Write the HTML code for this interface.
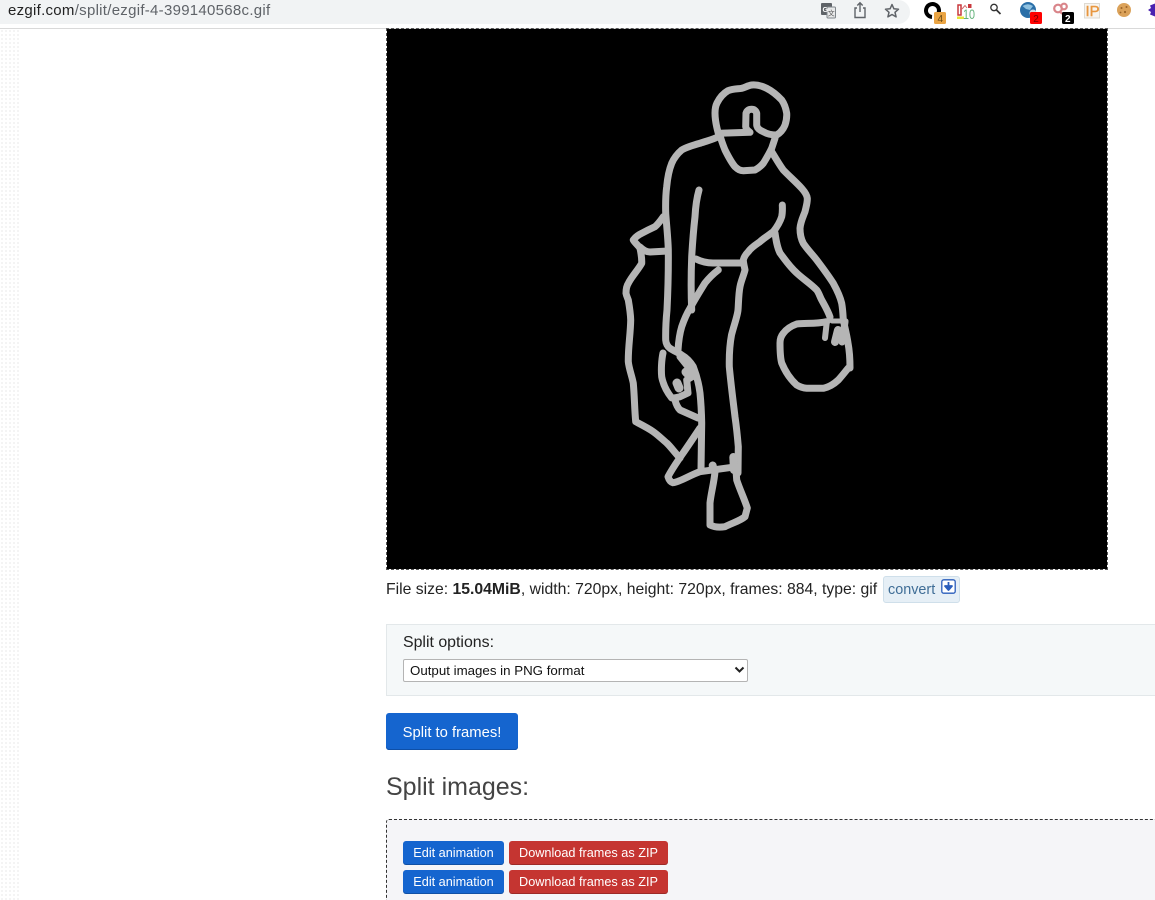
<!DOCTYPE html>
<html lang="en"><head><meta charset="utf-8"><title>ezgif split</title>
<style>
html,body{margin:0;padding:0;background:#fff;width:1155px;height:900px;overflow:hidden}
body{position:relative;font-family:"Liberation Sans",sans-serif;color:#222}
.a{position:absolute}
.pill{left:0;top:0;width:910px;height:24px;background:#f1f3f4;border-radius:0 12px 12px 0}
.url{left:8px;top:1px;font-size:15px;line-height:20px;color:#5f6368;letter-spacing:.28px;white-space:nowrap}
.url b{font-weight:400;color:#222}
.rule{left:0;top:28px;width:1155px;height:1px;background:#d9d9d9}
.dots{left:0;top:29px;width:19px;height:871px;background-image:radial-gradient(#f0f0f0 .8px,transparent 1px);background-size:4px 4px}
.img{left:387px;top:29px;width:720px;height:540px;background:#000;outline:1px dashed #555}
.info{left:386px;top:580px;font-size:15.75px;line-height:20px;white-space:nowrap;color:#222}
.conv{left:883px;top:576px;width:75px;height:25px;background:#e6eff6;border:1px solid #cfdfea;border-radius:3px}
.conv span{position:absolute;left:4px;top:4px;font-size:14.4px;line-height:18px;color:#3f6d96}
.panel{left:386px;top:624px;width:770px;height:70px;background:#f5f8f9;border:1px solid #e3e8ea;border-right:0}
.lab{left:403px;top:633px;font-size:15.9px;line-height:20px;color:#222}
.sel{left:403px;top:659px;width:343px;height:21px;background:#fff;border:1px solid #b4b4b4;border-radius:2px}
.sel span{position:absolute;left:6px;top:3px;font-size:13.3px;line-height:16px;color:#111}
.btn{text-align:center;color:#fff;border-radius:3px;white-space:nowrap}
.big{left:386px;top:713px;width:132px;height:37px;line-height:41px;font-size:14.8px;background:#1565cf;box-shadow:inset 0 -1px 0 #0e4fa8}
h2{position:absolute;margin:0;left:386px;top:771px;font-size:25px;line-height:33px;font-weight:400;color:#444}
.box{left:386px;top:819px;width:780px;height:90px;background:#f5f5f8;border:1px dashed #333;border-radius:3px}
.s{height:24px;line-height:24px;font-size:12.7px;box-shadow:inset 0 -1px 0 rgba(0,0,0,.2)}
.bl{left:403px;width:101px;background:#1565cf}
.rd{left:509px;width:159px;background:#c53531}
</style></head><body>
<div class="a pill"></div>
<div class="a url"><b>ezgif.com</b>/split/ezgif-4-399140568c.gif</div>

<!-- toolbar icons -->
<svg class="a" style="left:810px;top:0" width="345" height="28" viewBox="810 0 345 28">
  <!-- translate -->
  <rect x="821" y="3" width="11" height="12" rx="1" fill="#5f6368"/>
  <rect x="827" y="7" width="8.500" height="11" rx="1" fill="#e8e9ea" stroke="#80868b"/>
  <text x="822.500" y="12" font-family="Liberation Sans" font-size="7" font-weight="700" fill="#fff">G</text>
  <text x="827.800" y="15.500" font-family="Noto Sans CJK SC,sans-serif" font-size="7" fill="#555">文</text>
  <!-- share -->
  <path d="M857 8H855V17.500H865V8H863M860 12V3M857.300 5.500L860 2.800L862.700 5.500" fill="none" stroke="#5f6368" stroke-width="1.400"/>
  <!-- star -->
  <path d="M892 4.500L893.900 8.800L898.500 9.200L895 12.300L896.100 16.900L892 14.500L887.900 16.900L889 12.300L885.500 9.200L890.100 8.800Z" fill="none" stroke="#5f6368" stroke-width="1.500" stroke-linejoin="round"/>
  <!-- O ext -->
  <path d="M938 14A6.500 6.500 0 1 0 932 17" fill="none" stroke="#000" stroke-width="4"/>
  <rect x="934" y="12" width="12" height="12" rx="1.500" fill="#eaa443"/>
  <text x="937.500" y="22" font-family="Liberation Sans" font-size="10" fill="#6b4a14">4</text>
  <!-- 10 ext -->
  <rect x="958" y="5" width="3" height="10" fill="#fff" stroke="#c9393d" stroke-width="1.500"/>
  <rect x="968" y="4" width="3.500" height="4" fill="#c9393d"/>
  <path d="M962 9L965 5.500L967 8" fill="none" stroke="#d36a6a"/>
  <rect x="957" y="16.500" width="7" height="2.500" fill="#e8e337"/>
  <text x="963" y="19" font-family="Liberation Sans" font-size="14" textLength="12" lengthAdjust="spacingAndGlyphs" fill="#63b27a">10</text>
  <!-- search -->
  <circle cx="994" cy="7.500" r="3.200" fill="none" stroke="#333" stroke-width="1.300"/>
  <path d="M996.500 10L1000.500 14" stroke="#333" stroke-width="1.700"/>
  <!-- globe -->
  <circle cx="1028" cy="10" r="8" fill="#2a6fa8"/>
  <path d="M1022.500 6Q1028 2.500 1033 6L1030 10L1026 9Z" fill="#8fc1e0"/>
  <circle cx="1033" cy="13" r="3.500" fill="#d5d9e0"/>
  <rect x="1030" y="12" width="12" height="12" rx="1.500" fill="#f00"/>
  <text x="1033.300" y="22" font-family="Liberation Sans" font-size="10" fill="#700">2</text>
  <!-- ribbon -->
  <circle cx="1058" cy="8.500" r="3.800" fill="none" stroke="#d9858a" stroke-width="2.200"/>
  <circle cx="1064" cy="6.500" r="2.800" fill="none" stroke="#d9858a" stroke-width="2.200"/>
  <path d="M1060 12L1067 17" stroke="#d9858a" stroke-width="2.200"/>
  <rect x="1062" y="12" width="12" height="12" rx="1.500" fill="#000"/>
  <text x="1065" y="22" font-family="Liberation Sans" font-size="10" font-weight="700" fill="#fff">2</text>
  <!-- IP -->
  <rect x="1084.500" y="3.500" width="15" height="14.500" fill="#f8f4ee" stroke="#dedad2"/>
  <text x="1085.500" y="16" font-family="Liberation Sans" font-size="15" stroke="#e8963e" stroke-width=".4" fill="#e8963e">IP</text>
  <!-- cookie -->
  <circle cx="1124" cy="10" r="7" fill="#dba25a"/>
  <circle cx="1121.500" cy="8" r="1" fill="#9a6428"/><circle cx="1126.500" cy="7" r="1" fill="#9a6428"/><circle cx="1125" cy="12" r="1.100" fill="#9a6428"/><circle cx="1120.500" cy="12.500" r=".9" fill="#9a6428"/>
  <!-- purple -->
  <path d="M1155 3.500L1150 5.500L1151 8L1148 10L1151 12L1150 14.500L1155 16.500Z" fill="#4a22b0"/>
</svg>
<div class="a rule"></div>
<div class="a dots"></div>

<div class="a img"></div>
<svg class="a" style="left:387px;top:29px" width="720" height="540" viewBox="387 29 720 540">
  <g fill="none" stroke="#b5b5b5" stroke-width="7" stroke-linecap="round" stroke-linejoin="round">
    <!-- hair -->
    <path d="M718.300 133.300C716 125 715 118 715 113C715 108 716 105 717 103C720 97 724 93 728 90.700C733 88.500 738 89 741.700 88.300C745 87.500 748 85.500 751.700 85C757 84.500 762 86 766.700 88.300C772 91 777 95 781.700 100C784.500 104 786 109 786.700 113.300C787 118 786 122 785 125C783 130 780 133 776.700 135C772 135 767 134 763.300 131.700C759 130 757 128 756.700 125L756.700 113.300C756 110.500 754 109.300 751.700 109.300C749 109.300 747 110.500 746 113.300L745.700 126.700C746 129 748 131 750 132.300L720 133.300"/>
    <!-- face -->
    <path d="M720 135C721 140 723 145 725 150C728 156 731 162 735 166.700C738 169.500 740 170.700 743.300 170.700L755 170C758 168.500 761 166 763.300 163.300C766 159 769 154 771.700 148.300L775 138.300"/>
    <!-- right arm -->
    <path d="M771.700 151.700C775 157 779 164 783.300 170C789 176 796 182 801.700 188.300C805 192 807 195 807.300 198.300C807.500 203 806 207 805 211.700C803 217 800.500 222 800 228.300C800 234 801 239 803.300 243.300C807 249 812 254 816.700 260C822 267 828 275 833.300 283.300C837 290 840 296 841.700 303.300C843 311 843 316 843.300 320C845 328 847 336 848 343C849.500 351 850 360 850 368"/>
    <!-- inner arm + front leg -->
    <path d="M782.300 205C782.500 209 782.500 213 781.700 216.700C780 222 777 227 773.300 231.700C769 235 764 238 760 241.700C756 244.500 751 247.500 748.300 251.700C746 254 744 257 743.300 260C743.500 264 744.500 267 745 270C743.500 276 741 281 740 286.700C738.500 294 738.500 305 738 310C737.500 316 734 325 731.500 335C730 343 729 352 729.300 366.700C731 385 733 400 735 416.700C736.500 427 737.500 437 738.300 446.700L738 473"/>
    <!-- forearm second line -->
    <path d="M775 233C776 240 777 247 780 253C785 260 790 267 796.700 273C803 279 811 284 816.700 290C819 293 820 297 821.700 300C825 306 828 311 830 317"/>
    <!-- left body line -->
    <path d="M718.300 136.700C712 140 706 141 700 143.300C694 145 687 147 681.700 150C677 154 674 158 671.700 163.300C669 170 667.500 178 666.700 186.700C665.500 196 665.500 205 665.700 213C666.500 225 668 238 668.300 250C668.500 270 668 290 667 310C666 320 665.500 330 665.700 340C666 344 667.500 346.500 670 348.300C674 351 678 352.500 681.700 355C687 358 690.500 362 693.300 366.700C696.500 375 699 385 700 393C701 403 701.500 413 701.700 423L701 470"/>
    <!-- back arm -->
    <path d="M663.300 216.700C661 220 658 224 655 226.700C650 229 646 231 641.700 233.300C638 235 635.500 237 633.300 240C635 243 638 245 640 248.300C641 253 642 258 641.700 263.300C638 270 632 276 628.300 283.300C626.500 286 626 290 626 293.300C626.500 296 627.500 298 628.300 300C629.500 307 630.500 313 630.700 320C630.500 334 628 348 628.300 361.700C629 369 632 376 633.300 383.300C634.500 396 634.500 409 635.700 421.700C642 425 648 428 653.300 431.700C658 435 662 439 666.700 443C671 447 675 453 680 458"/>
    <path d="M640 247C643 250 647 252 650 252L668 251"/>
    <!-- torso line -->
    <path d="M699 190C697 197 695.500 207 695 216.700C693.500 230 692.500 243 691.700 256.700C691 275 691 295 691.700 310"/>
    <!-- waist -->
    <path d="M696 259C702 262 707 263 713 263L741 263"/>
    <!-- thigh -->
    <path d="M718.300 270C713 274 709 278 705 283C700 291 695 299 690 308.300C686.500 314 684 320 681.700 326.700C679.500 334 678.500 342 678 350"/>
    <!-- hand -->
    <path d="M663 353C661.500 360 661 370 661.700 376.700C663 384 667 392 671.700 398C674 398 677 397.500 680 396.700L688 393L686.700 380L695 375L688 366.700L680 356.700"/>
    <path d="M675 400C676 404 677 407 680 410L698 418"/>
    <!-- shoe / bottom -->
    <path d="M700 428C694 437 688 446 681.700 455C677 462 672 469 668 476.700C669 480 670.500 482 673 482.700C680 482 690 475 700 471.700L736.700 466.700"/>
    <!-- foot -->
    <path d="M715 471.700C714 483 711 493 710 503L710 525C715 527.500 720 527.500 725 526.700C732 523 740 521 745 516.700L747.300 508C744 498 740 490 736.700 480L736 470"/>
    <!-- ball -->
    <path d="M826.700 321.700C816 324 806 323 796.700 324C791 326 786.500 329 783.300 333.300C781 336 780 339 780 343C780 350 780 357 781.700 363C785 371 790 379 796.700 385C800 387 803 388 806.700 388.300L823.300 388.300C829 387 834 384 838.300 380C842 376 845 372 848.300 368"/>
    <path d="M826.700 323L825 338" stroke-width="6"/>
    <path d="M838 330L835 342" stroke-width="8"/>
    <path d="M845 322L842 342" stroke-width="7"/>
    <path d="M832 321L846 321" stroke-width="5"/>
    <path d="M712.700 465.500L713 468M733.300 457L734 470" stroke-width="8"/>
    <path d="M677 383L679 388M686 372L690 376" stroke-width="9"/>
  </g>
</svg>

<div class="a info">File size: <b>15.04MiB</b>, width: 720px, height: 720px, frames: 884, type: gif</div>
<div class="a conv"><span>convert</span>
  <svg class="a" style="left:57px;top:2px" width="15" height="15" viewBox="0 0 15 15"><rect x=".8" y=".8" width="13.400" height="13.400" rx="2" fill="#fff" stroke="#2a5dbb" stroke-width="1.300"/><path d="M7.500 3V8M4 7L7.500 11L11 7Z" fill="#2a5dbb" stroke="#2a5dbb" stroke-width="1.800" stroke-linejoin="round"/></svg>
</div>

<div class="a panel"></div>
<div class="a lab">Split options:</div>
<div class="a sel"><span>Output images in PNG format</span>
  <svg class="a" style="left:330px;top:6px" width="11" height="8" viewBox="0 0 11 8"><path d="M1.500 1.500L5.500 5.500L9.500 1.500" fill="none" stroke="#222" stroke-width="2"/></svg>
</div>

<div class="a btn big">Split to frames!</div>
<h2>Split images:</h2>
<div class="a box"></div>
<div class="a btn s bl" style="top:841px">Edit animation</div>
<div class="a btn s rd" style="top:841px">Download frames as ZIP</div>
<div class="a btn s bl" style="top:870px">Edit animation</div>
<div class="a btn s rd" style="top:870px">Download frames as ZIP</div>
</body></html>
